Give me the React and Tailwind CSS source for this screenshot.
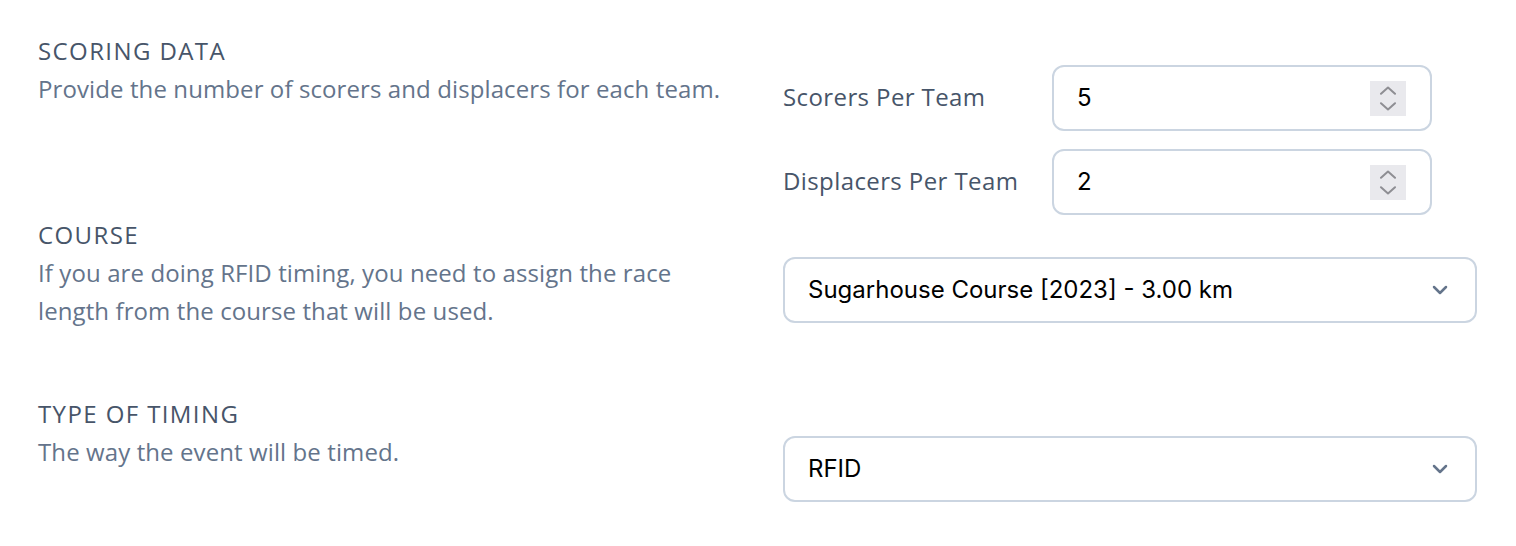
import { ChevronDown } from 'lucide-react';

const Spinner = () => (
  <div className="w-[36px] h-[35px] bg-[#e9e9ed] flex flex-col items-center justify-center gap-[7px]">
    <svg width="18" height="9" viewBox="0 0 18 9" fill="none">
      <path d="M2 7.8L9 1.5L16 7.8" stroke="#8e8e93" strokeWidth="2" strokeLinecap="round" strokeLinejoin="round" />
    </svg>
    <svg width="18" height="9" viewBox="0 0 18 9" fill="none">
      <path d="M2 1.2L9 7.5L16 1.2" stroke="#8e8e93" strokeWidth="2" strokeLinecap="round" strokeLinejoin="round" />
    </svg>
  </div>
);

const NumberField = ({ label, value }) => (
  <div className="flex items-center">
    <label className="w-[269px] text-[24px] leading-[38px] tracking-[0.4px] text-[#475569] -mt-[3px]">{label}</label>
    <div className="w-[380px] h-[66px] border-2 border-[#cbd5e1] rounded-[12px] flex items-center justify-between pl-[23px] pr-[24px]">
      <span className="font-['Inter',sans-serif] text-[24px] text-black">{value}</span>
      <Spinner />
    </div>
  </div>
);

const SelectField = ({ value }) => (
  <div className="w-full h-[66px] border-2 border-[#cbd5e1] rounded-[12px] flex items-center justify-between pl-[23px] pr-[23px]">
    <span className="font-['Inter',sans-serif] text-[24px] text-black">{value}</span>
    <ChevronDown size={24} strokeWidth={2.5} className="text-[#64748b]" />
  </div>
);

const Section = ({ title, children }) => (
  <div>
    <h3 className="text-[24px] leading-[38px] font-medium tracking-[1.4px] text-[#475569] uppercase">{title}</h3>
    <p className="text-[24px] leading-[38px] tracking-[0.1px] text-[#64748b]">{children}</p>
  </div>
);

const App = () => {
  return (
    <div className="w-[1516px] h-[546px] bg-white pl-[38px] pr-[39px] pt-[32px] font-['Open_Sans',sans-serif] overflow-hidden">
      {/* Scoring data */}
      <div className="grid grid-cols-[745px_1fr]">
        <Section title="Scoring Data">Provide the number of scorers and displacers for each team.</Section>
        <div className="pt-[33px] flex flex-col gap-[18px]">
          <NumberField label="Scorers Per Team" value="5" />
          <NumberField label="Displacers Per Team" value="2" />
        </div>
      </div>

      {/* Course */}
      <div className="grid grid-cols-[745px_1fr] mt-[1px]">
        <div className="w-[680px]">
          <Section title="Course">
            If you are doing RFID timing, you need to assign the race length from the course that will be used.
          </Section>
        </div>
        <div className="pt-[41px]">
          <SelectField value="Sugarhouse Course [2023] - 3.00 km" />
        </div>
      </div>

      {/* Timing */}
      <div className="grid grid-cols-[745px_1fr] mt-[65px]">
        <Section title="Type of Timing">The way the event will be timed.</Section>
        <div className="pt-[41px]">
          <SelectField value="RFID" />
        </div>
      </div>
    </div>
  );
};

export default App;
